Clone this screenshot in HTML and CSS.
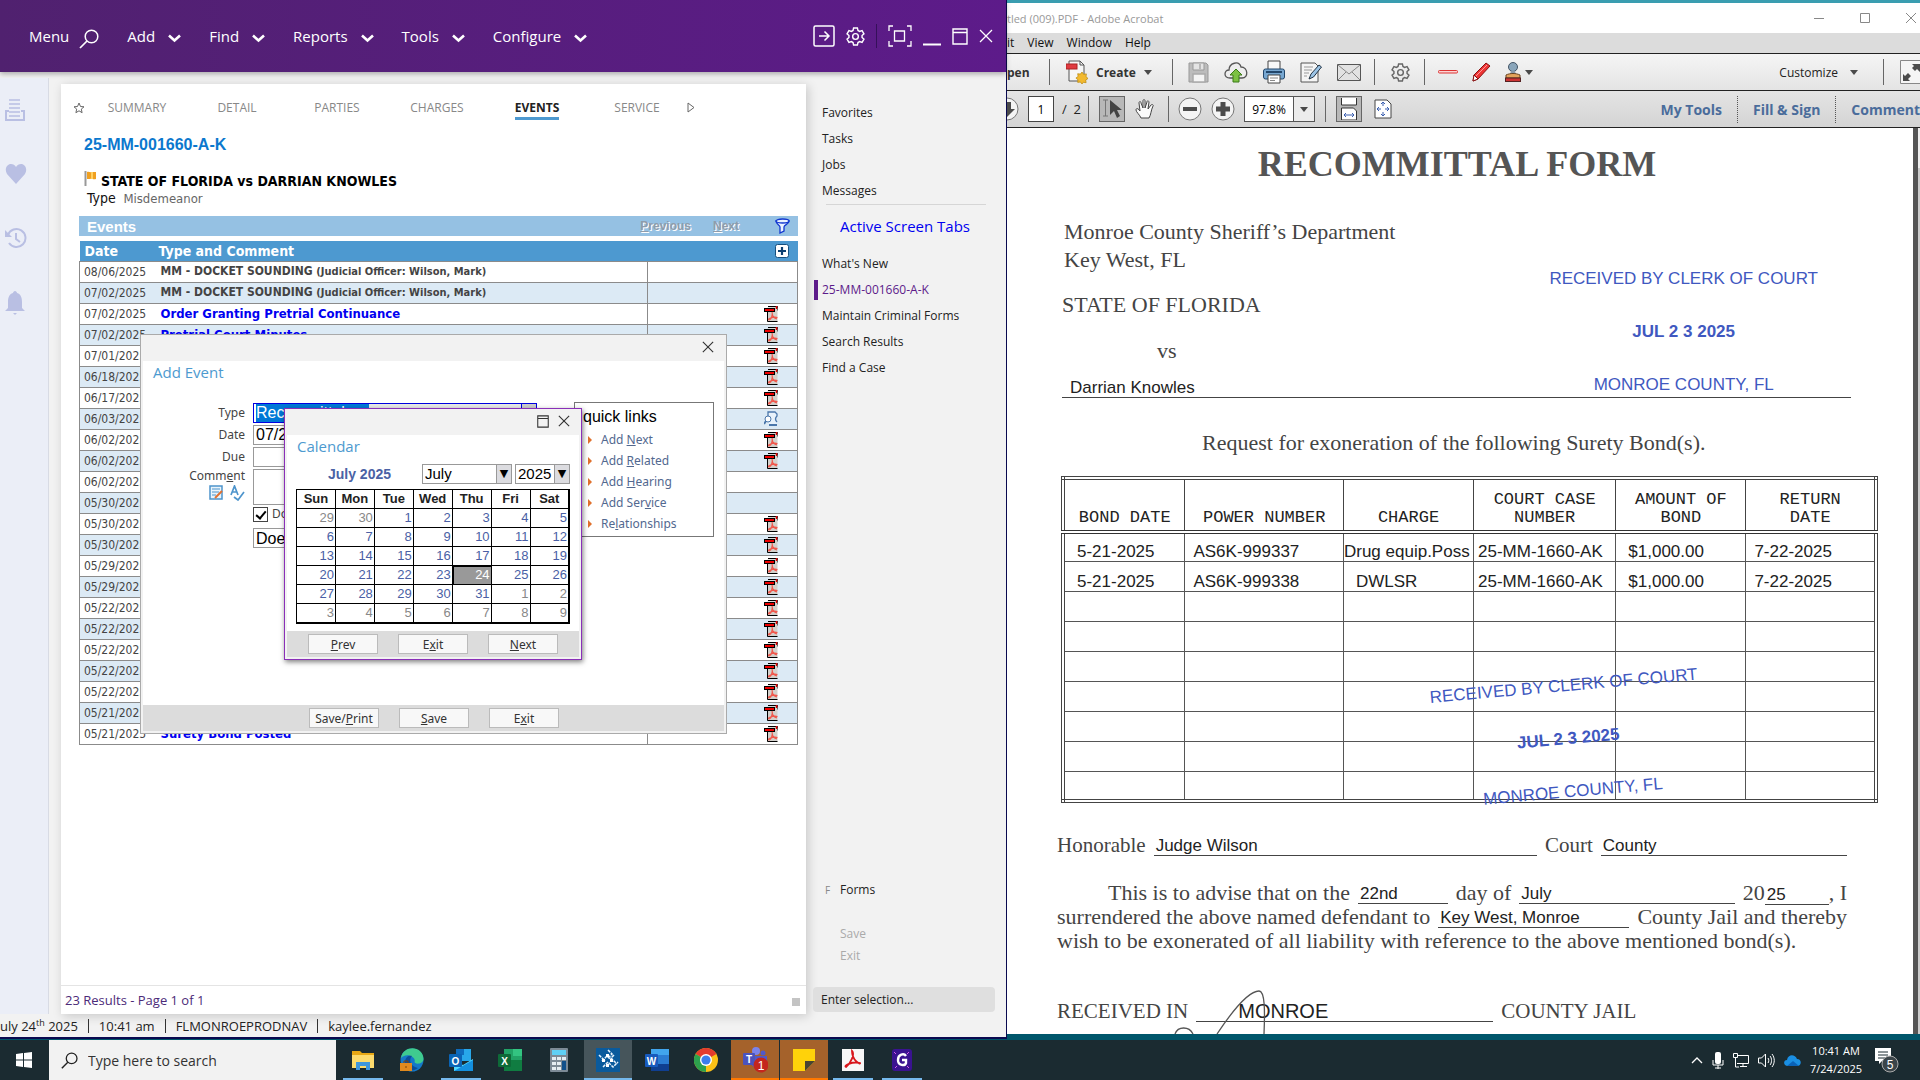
FILE: index.html
```html
<!DOCTYPE html>
<html lang="en">
<head>
<meta charset="utf-8">
<title>Case Manager - Events</title>
<link rel="stylesheet" href="styles.css">
</head>
<body>
<svg class="defs" aria-hidden="true">
  <symbol id="chev" viewBox="0 0 13 9"><path d="M1 1.5 6.500 6.500 12 1.500" fill="none" stroke="#fff" stroke-width="2.600"/></symbol>
  <symbol id="x" viewBox="0 0 14 14"><path d="M1 1 13 13M13 1 1 13" fill="none" stroke="currentColor" stroke-width="1.300"/></symbol>
  <symbol id="pdf" viewBox="0 0 14 16"><path d="M4 .5h9.500v4" fill="#ddd" stroke="#000"/><rect x="3.500" y="1.500" width="10" height="14" fill="#d3d0cb"/><path d="M3.500 5v10.500H13.500" fill="none" stroke="#000"/><rect x=".5" y="2.500" width="10" height="3" fill="#f00000" stroke="#000"/><path d="M12.500 0v3" stroke="#d00" stroke-width="1.500"/><path d="M8 6c1 2 .5 3.500-.5 5.500S5 14.500 4.500 13.500 9 10.500 13.500 11.500M8 8c.5 2 2.500 4 5 5" fill="none" stroke="#f0584c" stroke-width="1.200"/></symbol>
  <symbol id="doc" viewBox="0 0 14 16"><path d="M4 1h7l2 2v3c-2 1-2 3 0 4v3H5z" fill="#e8f2fb"/><path d="M4 5V1h7l2 2v2c-2 2-2 4 0 6" fill="none" stroke="#4b77ab" stroke-width="1.300"/><circle cx="4" cy="8" r="3" fill="#fff" stroke="#4b77ab"/><path d="M2 10 0 13M5 14h8" stroke="#4b77ab" stroke-width="2"/></symbol>
  <symbol id="gear" viewBox="0 0 20 20"><path d="M8 1h4l.6 2.600 1.700 1 2.600-.8 2 3.400-2 1.800v2l2 1.800-2 3.400-2.600-.8-1.700 1L12 19H8l-.6-2.600-1.700-1-2.600.8-2-3.400L3.100 11V9L1.100 7.200l2-3.400 2.600.8 1.700-1z" fill="none" stroke="currentColor" stroke-width="1.500"/><circle cx="10" cy="10" r="3" fill="none" stroke="currentColor" stroke-width="1.500"/></symbol>
  <symbol id="win" viewBox="0 0 16 17"><path d="M1 1h14v15H1zM1 4.500h14" fill="none" stroke="currentColor" stroke-width="1.400"/></symbol>
  <symbol id="caret" viewBox="0 0 8 5"><path d="M0 0h8L4 5z" fill="#4a4a4a"/></symbol>
  <symbol id="lens" viewBox="0 0 20 20"><circle cx="12.500" cy="7.500" r="6.300" fill="none" stroke="currentColor" stroke-width="1.500"/><path d="M8 12 1 19" stroke="currentColor" stroke-width="1.700"/></symbol>
</svg>

<div class="desktop">
<section class="app">
  <header class="topbar">
    <nav class="menu">
      <button>Menu</button><button class="find" aria-label="Search"><svg width="20" height="20"><use href="#lens"/></svg></button>
      <button>Add <svg width="13" height="9"><use href="#chev"/></svg></button>
      <button>Find <svg width="13" height="9"><use href="#chev"/></svg></button>
      <button>Reports <svg width="13" height="9"><use href="#chev"/></svg></button>
      <button>Tools <svg width="13" height="9"><use href="#chev"/></svg></button>
      <button>Configure <svg width="13" height="9"><use href="#chev"/></svg></button>
    </nav>
    <div class="tools">
      <button aria-label="Go"><svg width="22" height="22" viewBox="0 0 22 22" fill="none" stroke="#fff" stroke-width="1.500"><rect x="1" y="1" width="20" height="20" rx="1.500"/><path d="M6 11h10M11.500 6.500 16 11l-4.500 4.500"/></svg></button>
      <button aria-label="Settings"><svg width="19" height="19"><use href="#gear"/></svg></button>
      <span class="sep"></span>
      <button aria-label="Capture"><svg width="24" height="22" viewBox="0 0 24 22" fill="none" stroke="#fff" stroke-width="1.300"><path d="M5 1H1v5M19 1h4v5M5 21H1v-5M19 21h4v-5M6.500 6h10v10h-10z"/></svg></button>
      <button aria-label="Minimize"><svg width="18" height="20" viewBox="0 0 18 20"><path d="M0 18.500h18" stroke="#fff" stroke-width="2"/></svg></button>
      <button aria-label="Maximize"><svg width="16" height="17"><use href="#win"/></svg></button>
      <button aria-label="Close"><svg width="14" height="14"><use href="#x"/></svg></button>
    </div>
  </header>

  <div class="work">
    <aside class="rail">
      <svg width="20" height="22" viewBox="0 0 20 22" fill="none" stroke="#b9bfe3" stroke-width="2"><path d="M4 1h11M4 5h11M4 9h11M4 13h11M4 17h11" stroke-width="1.600"/><path d="M4 12H1v9h18v-9h-3"/></svg>
      <svg width="22" height="22" viewBox="0 0 22 22"><path d="M11 21 2 11C-1 6 2 1 6 1c2 0 4 1 5 3 1-2 3-3 5-3 4 0 7 5 4 10z" fill="#b9bfe3"/></svg>
      <svg width="22" height="22" viewBox="0 0 22 22" fill="none" stroke="#b9bfe3" stroke-width="2"><path d="M3 8a9 9 0 1 1 1 8M11 6v6l4 3"/><path d="M0 3v7h7z" fill="#b9bfe3" stroke="none"/></svg>
      <svg width="20" height="24" viewBox="0 0 20 24" fill="#b9bfe3"><path d="M10 0c1 0 2 1 2 2 4 1 5 5 5 9v6l3 3H0l3-3v-6c0-4 1-8 5-9 0-1 1-2 2-2zM8 22h4l-2 2z"/></svg>
    </aside>

    <main class="panel">
      <nav class="tabs">
        <svg width="12" height="12" viewBox="0 0 12 12"><path d="M6 1l1.500 3.500 3.500.3-2.700 2.300.8 3.600L6 8.800 2.900 10.700l.8-3.600L1 4.800l3.500-.3z" fill="none" stroke="#666"/></svg>
        <a href="#">SUMMARY</a><a href="#">DETAIL</a><a href="#">PARTIES</a><a href="#">CHARGES</a><a href="#" class="on">EVENTS</a><a href="#">SERVICE</a>
        <svg width="8" height="11" viewBox="0 0 8 11"><path d="M1 1v9l6-4.500z" fill="none" stroke="#666"/></svg>
      </nav>
      <div class="case">
        <h1>25-MM-001660-A-K</h1>
        <div class="style"><svg width="12" height="15" viewBox="0 0 12 15"><path d="M1.500 0v15" stroke="#999" stroke-width="2"/><path d="M3 1c2-1 3 1 5 0h4v7c-3 1-4-1-6 0H3z" fill="#f0a020"/><path d="M8 1v7" stroke="#ffd060" stroke-width="2"/></svg>STATE OF FLORIDA vs DARRIAN KNOWLES</div>
        <div class="kind"><span>Type</span> Misdemeanor</div>
      </div>
      <div class="evbar">
        <h2>Events</h2><a href="#"><u>P</u>revious</a><a href="#"><u>N</u>ext</a>
        <svg width="15" height="16" viewBox="0 0 15 16" fill="#eaf3ff" stroke="#1238d0" stroke-width="1.300"><path d="M1 3c0 3 4 4 4 6v6l4-2V9c0-2 5-3 5-6z"/><ellipse cx="7.500" cy="3" rx="6.500" ry="2"/></svg>
      </div>
      <table class="events">
        <colgroup><col class="c1"><col class="c2"><col></colgroup>
        <thead><tr><th>Date</th><th>Type and Comment</th><th class="ic"><button aria-label="Add event"><svg width="14" height="14" viewBox="0 0 14 14"><rect x=".5" y=".5" width="13" height="13" rx="2" fill="#fff" stroke="#17507e"/><path d="M7 3v8M3 7h8" stroke="#0c3f70" stroke-width="2.200"/></svg></button></th></tr></thead>
        <tbody>
        <tr><td>08/06/2025</td><td class="hear">MM - DOCKET SOUNDING <small>(Judicial Officer: Wilson, Mark)</small></td><td></td></tr>
        <tr><td>07/02/2025</td><td class="hear">MM - DOCKET SOUNDING <small>(Judicial Officer: Wilson, Mark)</small></td><td></td></tr>
        <tr><td>07/02/2025</td><td><a href="#">Order Granting Pretrial Continuance</a></td><td class="ic"><svg width="14" height="16"><use href="#pdf"/></svg></td></tr>
        <tr><td>07/02/2025</td><td><a href="#">Pretrial Court Minutes</a></td><td class="ic"><svg width="14" height="16"><use href="#pdf"/></svg></td></tr>
        <tr><td>07/01/2025</td><td></td><td class="ic"><svg width="14" height="16"><use href="#pdf"/></svg></td></tr>
        <tr><td>06/18/2025</td><td></td><td class="ic"><svg width="14" height="16"><use href="#pdf"/></svg></td></tr>
        <tr><td>06/17/2025</td><td></td><td class="ic"><svg width="14" height="16"><use href="#pdf"/></svg></td></tr>
        <tr><td>06/03/2025</td><td></td><td class="ic"><svg width="14" height="16"><use href="#doc"/></svg></td></tr>
        <tr><td>06/02/2025</td><td></td><td class="ic"><svg width="14" height="16"><use href="#pdf"/></svg></td></tr>
        <tr><td>06/02/2025</td><td></td><td class="ic"><svg width="14" height="16"><use href="#pdf"/></svg></td></tr>
        <tr><td>06/02/2025</td><td></td><td></td></tr>
        <tr><td>05/30/2025</td><td></td><td></td></tr>
        <tr><td>05/30/2025</td><td></td><td class="ic"><svg width="14" height="16"><use href="#pdf"/></svg></td></tr>
        <tr><td>05/30/2025</td><td></td><td class="ic"><svg width="14" height="16"><use href="#pdf"/></svg></td></tr>
        <tr><td>05/29/2025</td><td></td><td class="ic"><svg width="14" height="16"><use href="#pdf"/></svg></td></tr>
        <tr><td>05/29/2025</td><td></td><td class="ic"><svg width="14" height="16"><use href="#pdf"/></svg></td></tr>
        <tr><td>05/22/2025</td><td></td><td class="ic"><svg width="14" height="16"><use href="#pdf"/></svg></td></tr>
        <tr><td>05/22/2025</td><td></td><td class="ic"><svg width="14" height="16"><use href="#pdf"/></svg></td></tr>
        <tr><td>05/22/2025</td><td></td><td class="ic"><svg width="14" height="16"><use href="#pdf"/></svg></td></tr>
        <tr><td>05/22/2025</td><td></td><td class="ic"><svg width="14" height="16"><use href="#pdf"/></svg></td></tr>
        <tr><td>05/22/2025</td><td></td><td class="ic"><svg width="14" height="16"><use href="#pdf"/></svg></td></tr>
        <tr><td>05/21/2025</td><td></td><td class="ic"><svg width="14" height="16"><use href="#pdf"/></svg></td></tr>
        <tr><td>05/21/2025</td><td><a href="#">Surety Bond Posted</a></td><td class="ic"><svg width="14" height="16"><use href="#pdf"/></svg></td></tr>
        </tbody>
      </table>
      <footer class="results"><span>23 Results - Page 1 of 1</span><i></i></footer>
    </main>

    <aside class="side">
      <nav class="links"><a href="#">Favorites</a><a href="#">Tasks</a><a href="#">Jobs</a><a href="#">Messages</a></nav>
      <h3>Active Screen Tabs</h3>
      <nav class="links"><a href="#">What's New</a><a href="#" class="cur">25-MM-001660-A-K</a><a href="#">Maintain Criminal Forms</a><a href="#">Search Results</a><a href="#">Find a Case</a></nav>
      <div class="forms"><button class="f"><span>F</span>Forms</button><button disabled>Save</button><button disabled>Exit</button></div>
      <input class="enter" aria-label="Enter selection" placeholder="Enter selection...">
    </aside>
  </div>

  <footer class="status"><span>uly 24<sup>th</sup> 2025</span><span>10:41 am</span><span>FLMONROEPRODNAV</span><span>kaylee.fernandez</span></footer>

  <section class="dialog add">
    <header><button aria-label="Close"><svg width="12" height="12"><use href="#x"/></svg></button></header>
    <div class="body">
      <h4>Add Event</h4>
      <div class="cols">
        <form class="form">
          <label for="type">Type</label><span class="combo"><input id="type" value="Recommittal"><button type="button" aria-label="Choose type">▼</button></span>
          <label for="date">Date</label><input id="date" class="must" value="07/24/2025">
          <label for="due">Due</label><input id="due">
          <div class="lab"><label for="comment">Comm<u>e</u>nt</label>
            <div><svg width="14" height="16" viewBox="0 0 14 16"><path d="M1 1h12v13H1z" fill="#eaf4fb" stroke="#4d94cc" stroke-width="1.500"/><path d="M3 4h8M3 7h7M3 10h4" stroke="#4d94cc"/><path d="M6 13 13 6" stroke="#e07030" stroke-width="2"/></svg><svg width="15" height="16" viewBox="0 0 15 16" fill="none" stroke="#4d94cc" stroke-width="1.700"><path d="M1 10 4.500 1 8 10M2 7h5M4 12l4 3 6-8"/></svg></div>
          </div><textarea id="comment"></textarea>
          <span></span><span class="chk"><input type="checkbox" id="dk" checked><label for="dk">Docket</label></span>
          <span></span><select class="does" aria-label="Public access"><option>Does not apply</option></select>
        </form>
        <div class="quick">
          <h5>quick links</h5>
          <a href="#">Add <u>N</u>ext</a><a href="#">Add <u>R</u>elated</a><a href="#">Add <u>H</u>earing</a><a href="#">Add Ser<u>v</u>ice</a><a href="#">Re<u>l</u>ationships</a>
        </div>
      </div>
    </div>
    <footer><button>Save/<u>P</u>rint</button><button><u>S</u>ave</button><button>E<u>x</u>it</button></footer>
  </section>

  <section class="dialog cal">
    <header><button aria-label="Maximize"><svg width="12" height="13"><use href="#win"/></svg></button><button aria-label="Close"><svg width="12" height="12"><use href="#x"/></svg></button></header>
    <div class="body">
      <h4>Calendar</h4>
      <div class="pick"><strong>July 2025</strong><span class="dd m"><select aria-label="Month"><option>July</option></select></span><span class="dd y"><select aria-label="Year"><option>2025</option></select></span></div>
      <table class="days">
        <thead><tr><th>Sun</th><th>Mon</th><th>Tue</th><th>Wed</th><th>Thu</th><th>Fri</th><th>Sat</th></tr></thead>
        <tbody>
        <tr><td class="o">29</td><td class="o">30</td><td>1</td><td>2</td><td>3</td><td>4</td><td>5</td></tr>
        <tr><td>6</td><td>7</td><td>8</td><td>9</td><td>10</td><td>11</td><td>12</td></tr>
        <tr><td>13</td><td>14</td><td>15</td><td>16</td><td>17</td><td>18</td><td>19</td></tr>
        <tr><td>20</td><td>21</td><td>22</td><td>23</td><td class="sel">24</td><td>25</td><td>26</td></tr>
        <tr><td>27</td><td>28</td><td>29</td><td>30</td><td>31</td><td class="o">1</td><td class="o">2</td></tr>
        <tr><td class="o">3</td><td class="o">4</td><td class="o">5</td><td class="o">6</td><td class="o">7</td><td class="o">8</td><td class="o">9</td></tr>
        </tbody>
      </table>
    </div>
    <footer><button><u>P</u>rev</button><button>E<u>x</u>it</button><button><u>N</u>ext</button></footer>
  </section>
</section>

<section class="acro">
  <header class="title"><span>tled (009).PDF - Adobe Acrobat</span>
    <div class="wb"><svg width="10" height="10"><path d="M0 5.500h10" stroke="#888"/></svg><svg width="10" height="10"><path d="M.5.5h9v9h-9z" fill="none" stroke="#888"/></svg><svg width="10" height="10"><path d="M0 0 10 10M10 0 0 10" stroke="#888"/></svg></div>
  </header>
  <nav class="mbar"><button>it</button><button>View</button><button>Window</button><button>Help</button></nav>
  <div class="tb one">
    <button class="open">pen</button><i class="sep"></i>
    <button class="create"><svg width="22" height="24" viewBox="0 0 22 24"><path d="M3 1h11l4 4v16H3z" fill="#f6f6f6" stroke="#555"/><path d="M14 1v4h4" fill="none" stroke="#555"/><rect x="0" y="4" width="11" height="5" fill="#e03a40" stroke="#a22"/><path d="M16 12l1.600 2.300 2.800-.4-.4 2.700 2 1.900-2.300 1.500.4 2.700-2.700-.4L16 24l-1.600-2-2.700.4.200-2.700-2-1.600 2.200-1.700-.4-2.700 2.700.4z" fill="#f2b92f" stroke="#b8860b" stroke-width=".7"/></svg>Create<svg width="8" height="5"><use href="#caret"/></svg></button><i class="sep"></i>
    <div class="grp a">
    <svg width="21" height="21" viewBox="0 0 21 21"><path d="M1 1h17l2 2v17H1z" fill="#bcbcbc" stroke="#999"/><path d="M5 1h11v7H5z" fill="#e4e4e4" stroke="#999"/><path d="M12 2v5M5 12h12v8H5z" fill="#f4f4f4" stroke="#aaa" stroke-width="1.500"/></svg>
    <svg width="24" height="22" viewBox="0 0 24 22"><path d="M6 17C-1 17 0 9 5 9 5 2 15-1 17 6c7 0 8 11 1 11z" fill="#eee" stroke="#555" stroke-width="1.300"/><path d="M12 8l6 6h-3v7h-6v-7H6z" fill="#7cc142" stroke="#3a7a17"/></svg>
    <svg width="22" height="24" viewBox="0 0 22 24"><path d="M5 1h12v9H5z" fill="#f8f8f8" stroke="#444"/><rect x=".5" y="9" width="21" height="10" rx="2" fill="#77a7d1" stroke="#23476b"/><path d="M3 12h16" stroke="#23476b" stroke-width="2"/><path d="M5 15h12v8H5z" fill="#fff" stroke="#444"/><path d="M7 18h8M7 20.500h5" stroke="#888"/></svg>
    <svg width="22" height="21" viewBox="0 0 22 21"><path d="M1 1h14l3 3v16H1z" fill="#f5f5f5" stroke="#555"/><path d="M4 5h9M4 8h8M4 11h5M4 14h3" stroke="#999"/><path d="M9 17 11 12 19 3l2.500 2-8 10z" fill="#9cc4e6" stroke="#234"/></svg>
    <svg width="24" height="17" viewBox="0 0 24 17"><path d="M.5.5h23v16H.5z" fill="#e2e2e2" stroke="#555"/><path d="M1 1l11 9L23 1M1 16l8-8M23 16l-8-8" fill="none" stroke="#888"/></svg>
    </div><i class="sep"></i>
    <svg class="cog" width="19" height="19"><use href="#gear"/></svg><i class="sep"></i>
    <div class="grp b">
    <svg width="20" height="4"><rect x=".5" y=".5" width="19" height="2.500" rx="1" fill="#fbd5d5" stroke="#d33"/></svg>
    <svg width="19" height="20" viewBox="0 0 19 20"><path d="M1 19l1-6L14 1l4 3L6 17z" fill="#e33" stroke="#811"/><path d="M1 19l1-6 4 4z" fill="#fff" stroke="#811"/><path d="M4 14 15 3" stroke="#f99"/></svg>
    <span class="stampi"><svg width="16" height="20" viewBox="0 0 16 20"><circle cx="8" cy="5" r="4.500" fill="#8aa6bb" stroke="#456"/><path d="M6 9h4l1 4H5z" fill="#89a"/><path d="M1 13c4-2 10-2 14 0v3H1z" fill="#e3a35c" stroke="#642"/><rect x=".5" y="16" width="15" height="3.500" fill="#c33" stroke="#522"/></svg><svg width="8" height="5"><use href="#caret"/></svg></span>
    </div>
    <button class="cust">Customize<svg width="8" height="5"><use href="#caret"/></svg></button><i class="sep"></i>
    <svg class="exp" width="20" height="24" viewBox="0 0 20 24"><path d="M20 .5H.5v23H20" fill="#f5f5f5" stroke="#888"/><path d="M3 14v7h7l-2-2 3-3-3-3-3 3zM12 4h8v8l-3-3-2 2-3-3 2-2z" fill="#4c4c4c"/></svg>
  </div>
  <div class="tb two">
    <svg class="dn" width="12" height="24" viewBox="12 0 12 24"><circle cx="12" cy="12" r="11" fill="#f4f4f4" stroke="#777"/><path d="M8 5h8v7h4l-8 8-8-8h4z" fill="#4c4c4c"/></svg>
    <input class="pg" aria-label="Page" value="1"><span class="of">/&nbsp; 2</span><i class="sep"></i>
    <button class="press" aria-label="Select"><svg width="20" height="20" viewBox="0 0 20 20"><path d="M1 1h5M3.500 1v16M1 17h5" stroke="#777"/><path d="M8 1v15l4-4 3 7 3-2-3-6h5z" fill="#444"/></svg></button>
    <svg class="hand" width="20" height="20" viewBox="0 0 20 20"><path d="M6 19c-1-3-5-6-5-8s2-2 4 1L4 4c0-2 2-2 2 0l2 5V2c0-2 2-2 2 0v7l2-6c0-2 2-1 2 0l-1 7 3-4c1-1 3 0 2 1-2 4-2 9-4 12z" fill="#fafafa" stroke="#444"/></svg><i class="sep"></i>
    <svg class="pm" width="24" height="24" viewBox="0 0 24 24"><circle cx="12" cy="12" r="11" fill="#f4f4f4" stroke="#777"/><path d="M5 12h14" stroke="#4c4c4c" stroke-width="4"/></svg>
    <svg class="pm" width="24" height="24" viewBox="0 0 24 24"><circle cx="12" cy="12" r="11" fill="#f4f4f4" stroke="#777"/><path d="M5 12h14M12 5v14" stroke="#4c4c4c" stroke-width="5"/></svg>
    <span class="zoom"><input aria-label="Zoom" value="97.8%"><button aria-label="Zoom levels"><svg width="8" height="5"><use href="#caret"/></svg></button></span><i class="sep"></i>
    <button class="press" aria-label="Scrolling"><svg width="18" height="22" viewBox="0 0 18 22" fill="#fff" stroke="#333"><path d="M1.500 0v7h15V0M1.500 22V10h12l3 3v9z"/><path d="M4 17h10M6 15l-2 2 2 2M12 15l2 2-2 2" stroke="#3a5fb0" fill="none"/></svg></button>
    <svg class="fit" width="18" height="20" viewBox="0 0 18 20" fill="#fff" stroke="#444"><path d="M1 1h12l4 4v14H1z"/><path d="M9 3v4M9 13v4M3 10h4M11 10h4M7 5l2-2 2 2M7 15l2 2 2-2M5 8l-2 2 2 2M13 8l2 2-2 2" stroke="#3a5fb0" fill="none"/></svg>
    <div class="panes"><button>My Tools</button><button>Fill &amp; Sign</button><button>Comment</button></div>
  </div>
  <div class="view">
    <article class="paper">
      <h1>RECOMMITTAL FORM</h1>
      <p class="dept">Monroe County Sheriff’s Department<br>Key West, FL</p>
      <p class="state">STATE OF FLORIDA</p>
      <p class="vs">vs</p>
      <p class="def">Darrian Knowles</p>
      <p class="req">Request for exoneration of the following Surety Bond(s).</p>
      <table class="bond">
        <colgroup><col class="b1"><col class="b2"><col class="b3"><col class="b4"><col class="b5"><col class="b6"></colgroup>
        <thead><tr><th>BOND DATE</th><th>POWER NUMBER</th><th>CHARGE</th><th>COURT CASE<br>NUMBER</th><th>AMOUNT OF<br>BOND</th><th>RETURN<br>DATE</th></tr></thead>
        <tbody>
        <tr><td class="wide">5-21-2025</td><td>AS6K-999337</td><td class="flush">Drug equip.Poss</td><td class="tight">25-MM-1660-AK</td><td class="wide">$1,000.00</td><td>7-22-2025</td></tr>
        <tr><td class="wide">5-21-2025</td><td>AS6K-999338</td><td class="wide">DWLSR</td><td class="tight">25-MM-1660-AK</td><td class="wide">$1,000.00</td><td>7-22-2025</td></tr>
        <tr><td></td><td></td><td></td><td></td><td></td><td></td></tr>
        <tr><td></td><td></td><td></td><td></td><td></td><td></td></tr>
        <tr><td></td><td></td><td></td><td></td><td></td><td></td></tr>
        <tr><td></td><td></td><td></td><td></td><td></td><td></td></tr>
        <tr><td></td><td></td><td></td><td></td><td></td><td></td></tr>
        <tr><td></td><td></td><td></td><td></td><td></td><td></td></tr>
        <tr><td></td><td></td><td></td><td></td><td></td><td></td></tr>
        </tbody>
      </table>
      <p class="ln hon"><span>Honorable</span><b class="w384">Judge Wilson</b><span>Court</span><b class="w246">County</b></p>
      <p class="ln first"><span>This is to advise that on the</span><b class="w86">22nd</b><span>day of</span><b class="w209">July</b><span class="yr">20<b>25</b>, I</span></p>
      <p class="ln"><span>surrendered the above named defendant to</span><b class="w199">Key West, Monroe</b><span>County Jail and thereby</span></p>
      <p class="ln">wish to be exonerated of all liability with reference to the above mentioned bond(s).</p>
      <p class="ln rec"><span>RECEIVED IN</span><b>MONROE</b><span>COUNTY JAIL</span></p>
      <div class="ink s1"><span>RECEIVED BY CLERK OF COURT</span><strong>JUL 2 3 2025</strong><span>MONROE COUNTY, FL</span></div>
      <div class="ink s2"><span>RECEIVED BY CLERK OF COURT</span><strong>JUL 2 3 2025</strong><span>MONROE COUNTY, FL</span></div>
      <svg class="sig" width="100" height="46" viewBox="0 0 100 46" fill="none" stroke="#555" stroke-width="1.300"><path d="M44 46C56 28 74 3 86 3c6 0 6 20 5 43M2 46c3-8 14-8 18 0"/></svg>
    </article>
    <div class="edge"></div><div class="scroll"></div>
  </div>
</section>
</div>

<footer class="taskbar">
  <button class="start" aria-label="Start"><svg width="16" height="16" viewBox="0 0 16 16" fill="#fff"><path d="M0 2l7-1v6.500H0zM8 1l8-1v7.500H8zM0 8.500h7V15l-7-1zM8 8.500h8V16l-8-1z"/></svg></button>
  <label class="search"><svg width="17" height="17"><use href="#lens"/></svg><input placeholder="Type here to search" aria-label="Search"></label>
  <nav class="apps">
    <button class="run" aria-label="Explorer"><svg width="22" height="20" viewBox="0 0 22 20"><path d="M0 1h8l2 2h12v15H0z" fill="#e8a815"/><path d="M0 5h22v13H0z" fill="#fddb6d"/><path d="M4 20v-8h14v8h-4v-4H8v4z" fill="#3f97dd"/></svg></button>
    <button aria-label="Edge"><svg width="24" height="24" viewBox="0 0 24 24"><circle cx="12" cy="12" r="11.500" fill="#1578c8"/><path d="M1 10C3-3 23-3 23.500 11c0 5-8 6-9 3 2-5-8-10-13.500-4z" fill="#3fcb8f"/><path d="M5 15c0-7 5-8 7-7-4 4-1 11 6 12-5 4-13 3-13-5z" fill="#0b4e9a"/><path d="M0 15h12v8H0z" fill="#e08a1e"/><path d="M4 15v-2h4v2M5 19h2" stroke="#7a430a" fill="none"/></svg></button>
    <button class="run" aria-label="Outlook"><svg width="24" height="22" viewBox="0 0 24 22"><path d="M7 0h15v12H7z" fill="#28a8ea"/><path d="M7 0h8v6H7z" fill="#0f6cbd"/><path d="M5 11l9 5 10-6v12H5z" fill="#50d9ff"/><path d="M5 22 24 11v11z" fill="#1490df"/><rect y="5" width="13" height="13" rx="1" fill="#0a64b5"/><text x="6.500" y="15.500" class="gl">O</text></svg></button>
    <button aria-label="Excel"><svg width="24" height="22" viewBox="0 0 24 22"><path d="M6 0h18v22H6z" fill="#21a366"/><path d="M15 0h9v7h-9z" fill="#33c481"/><path d="M6 11h18v11H6z" fill="#107c41"/><rect y="5" width="13" height="13" rx="1" fill="#0e6a38"/><text x="6.500" y="15.500" class="gl">X</text></svg></button>
    <button aria-label="Calculator"><svg width="18" height="24" viewBox="0 0 18 24"><rect width="18" height="24" rx="1" fill="#7c8a96"/><path d="M2 2h14v5H2z" fill="#5fd0f5"/><path d="M2 9h4v3H2zM7 9h4v3H7zM12 9h4v3h-4zM2 14h4v3H2zM7 14h4v3H7zM2 19h4v3H2zM7 19h4v3H7z" fill="#e5edf2"/><path d="M12 13h4v9h-4z" fill="#12508a"/></svg></button>
    <button class="run act" aria-label="Odyssey"><svg width="24" height="24" viewBox="0 0 24 24"><path d="M0 0h24v24H0z" fill="#0a5a9c"/><g fill="none" stroke="#e6f2fc" stroke-width="1.500"><path d="M3 7 9 13M6 13l5-5 5 5M7 19l5-5 5 5 5-5M12 2l4 4-3 3M18 7l-3 3 6 6" stroke-dasharray="3 1"/></g><path d="M10 6h3v3h-3zM6 11h3v3H6zM14 11h3v3h-3zM10 16h3v3h-3z" fill="#fff"/></svg></button>
    <button aria-label="Word"><svg width="24" height="22" viewBox="0 0 24 22"><path d="M6 0h18v22H6z" fill="#2b7cd3"/><path d="M6 0h18v6H6z" fill="#41a5ee"/><path d="M6 15h18v7H6z" fill="#103f91"/><rect y="5" width="13" height="13" rx="1" fill="#185abd"/><text x="6.500" y="15.500" class="gl">W</text></svg></button>
    <button aria-label="Chrome"><svg width="24" height="24" viewBox="0 0 24 24"><circle cx="12" cy="12" r="12" fill="#fbc116"/><path d="M12 12 1.600 6A12 12 0 0 1 22.400 6z" fill="#e33b2e"/><path d="M12 12 1.600 6A12 12 0 0 0 12 24z" fill="#2da14d"/><circle cx="12" cy="12" r="6" fill="#fff"/><circle cx="12" cy="12" r="4.600" fill="#3b7ded"/></svg></button>
    <button class="alert" aria-label="Teams"><svg width="26" height="26" viewBox="0 0 26 26"><circle cx="14" cy="4" r="4" fill="#7b83eb"/><circle cx="21" cy="6" r="2.500" fill="#5059c9"/><path d="M9 9h16v7c0 4-14 8-16 0z" fill="#5059c9"/><rect x="1" y="6" width="12" height="12" rx="1" fill="#4b53bc"/><text x="7" y="15.500" class="gl">T</text><circle cx="19" cy="18" r="7.500" fill="#c4261d"/><text x="19" y="22.500" class="gl n">1</text></svg></button>
    <button class="alert" aria-label="Sticky Notes"><svg width="22" height="22" viewBox="0 0 22 22"><path d="M0 0h22v12L12 22H0z" fill="#ffd20a"/><path d="M12 22V12h10z" fill="#4a4432"/></svg></button>
    <button class="run" aria-label="Acrobat"><svg width="22" height="22" viewBox="0 0 22 22"><path d="M0 0h22v22H0z" fill="#f7f7f7"/><path d="M10 2c3 3-1 12-6 16-3-1 6-6 14-4 1 2-8-2-8-12z" fill="none" stroke="#d8161b" stroke-width="1.800"/></svg></button>
    <button class="run" aria-label="Snagit"><svg width="20" height="22" viewBox="0 0 20 22"><rect width="20" height="22" rx="3" fill="#3a1390"/><path d="M14 7c-2-3-8-2-8 4s7 6 8 3v-3h-4" fill="none" stroke="#fff" stroke-width="2.400"/><path d="M2 3l2 2M17 3l-2 2M3 19l2-2M17 19l-2-2" stroke="#d35bea"/></svg></button>
  </nav>
  <div class="tray">
    <svg width="12" height="7"><path d="M1 6 6 1l5 5" fill="none" stroke="#fff" stroke-width="1.300"/></svg>
    <svg width="12" height="17" viewBox="0 0 12 17"><rect x="3" width="6" height="12" rx="2" fill="#fff"/><path d="M1 8v5h10V8M6 13v4M3 16h6" fill="none" stroke="#fff"/></svg>
    <svg width="16" height="15" viewBox="0 0 16 15" fill="none" stroke="#fff"><path d="M4 2.500h11.500v8H4M7 13.500h7M10 11v3M.5.5h4v4h-4zM2.500 5v9H6"/></svg>
    <svg width="17" height="15" viewBox="0 0 17 15" fill="none" stroke="#fff"><path d="M.5 5h3l4-4v13l-4-4h-3zM10 5c1 1 1 4 0 5M12 3c2 2 2 7 0 9M14 1c3 4 3 9 0 13"/></svg>
    <svg width="17" height="11" viewBox="0 0 17 11"><path d="M4 11C-1 11-1 5 3 5c1-6 8-6 10-1 5 0 5 7 0 7z" fill="#1a8fe3"/><path d="M3 11 9 6l6 5z" fill="#0a62b8"/></svg>
    <time>10:41 AM<br>7/24/2025</time>
    <button class="note" aria-label="Notifications"><svg width="24" height="26" viewBox="0 0 24 26"><path d="M0 1h16v13H7l-3 3v-3H0z" fill="#fff"/><path d="M3 5h10M3 8h10M3 11h7" stroke="#1b2b31"/><circle cx="15" cy="17" r="8" fill="#3b454a" stroke="#aaa"/><text x="15" y="21.500" class="gl n">5</text></svg></button>
  </div>
</footer>
</body>
</html>
```
FILE: styles.css
```css
* { box-sizing: border-box; }
body { margin: 0; height: 100vh; display: flex; flex-direction: column; overflow: hidden; font-family: "Open Sans", "Noto Sans", sans-serif; font-size: 13px; color: #222; background: #00566b; }
button { font: inherit; color: inherit; background: none; border: 0; padding: 0; margin: 0; white-space: nowrap; }
input, select, textarea { font: inherit; border-radius: 0; outline: 0; }
a { color: inherit; text-decoration: none; }
h1, h2, h3, h4, h5, p { margin: 0; font-weight: normal; }
svg { flex: none; display: block; }
.defs { position: absolute; width: 0; height: 0; }
.gl { font: bold 10px "Liberation Sans", sans-serif; fill: #fff; text-anchor: middle; }
.gl.n { font-weight: normal; font-size: 12px; }

.desktop { flex: 1; min-height: 0; display: grid; grid-template-columns: 1007fr 913fr; grid-template-rows: 100%; }

/* case manager */
.app { position: relative; display: flex; flex-direction: column; min-width: 0; margin-bottom: 1px; background: #f2f2f2; border-right: 1px solid #0a0a50; border-bottom: 2px solid #0a0a50; }
.topbar { flex: 0 0 72px; display: flex; justify-content: space-between; align-items: center; padding: 0 13px 0 29px; color: #fff; background: linear-gradient(90deg, #50216f, #5d1b8a); box-shadow: 0 2px 5px rgba(0,0,0,.3); }
.menu { display: flex; align-items: center; gap: 28px; font-size: 15px; }
.menu button { display: flex; align-items: center; gap: 13px; }
.menu button svg { margin-top: 4px; }
.menu .find { margin: 2px 0 0 -18px; }
.tools { display: flex; align-items: center; gap: 11px; }
.tools .sep { width: 1px; height: 24px; background: #35105a; }
.work { flex: 1; min-height: 0; display: flex; }
.rail { flex: 0 0 49px; margin: 6px 12px 0 0; padding: 21px 0 0 5px; background: #ebeef7; border-right: 1px solid #d8dbe4; display: flex; flex-direction: column; gap: 42px; }
.panel { flex: 1; min-width: 0; margin-top: 12px; background: #fff; display: flex; flex-direction: column; box-shadow: 2px 2px 10px rgba(0,0,0,.18); }
.tabs { display: grid; grid-template-columns: 16px repeat(6, 100px) 8px; align-items: center; justify-items: center; padding-left: 10px; height: 47px; font-size: 12px; color: #888; }
.tabs a { line-height: 18px; border-bottom: 3px solid transparent; margin-top: 3px; }
.tabs .on { font-weight: bold; color: #222; border-color: #4d99d0; }
.case { padding-left: 23px; height: 85px; font-family: "DejaVu Sans Condensed", "DejaVu Sans", sans-serif; }
.case h1 { font: bold 16px/28px "Liberation Sans", sans-serif; color: #0b78ce; }
.style { display: flex; align-items: center; gap: 5px; font-weight: bold; font-size: 14px; line-height: 18px; margin-top: 13px; color: #000; }
.style svg { margin-top: -6px; }
.kind { padding-left: 3px; line-height: 16px; color: #666; }
.kind span { color: #111; font-size: 14px; margin-right: 4px; }
.evbar { display: flex; align-items: center; height: 20px; margin: 0 8px 5px 18px; padding: 0 8px; background: #95c1e3; font: bold 12px "Liberation Sans", sans-serif; color: #8f9cab; text-shadow: 1px 1px #fff; }
.evbar h2 { flex: 1; font-weight: bold; font-size: 15px; color: #fff; text-shadow: none; }
.evbar a { margin-right: 22px; }
.evbar svg { margin-left: 14px; }
.events { margin: 0 8px 0 18px; border-collapse: collapse; table-layout: fixed; font: 12px "DejaVu Sans Condensed", "DejaVu Sans", sans-serif; color: #444; }
.events .c1 { width: 78px; }
.events .c2 { width: 490px; }
.events th { height: 20px; padding: 0 5px; background: #4d99d0; color: #fff; text-align: left; font-size: 14px; }
.events th:nth-child(2) { padding-left: 1px; }
.events td { height: 21px; padding: 0 4px; border: 1px solid #8b8b8b; line-height: 16px; white-space: nowrap; }
.events td:first-child { border-right: 0; }
.events td:nth-child(2) { border-left: 0; padding-left: 3px; font-weight: bold; }
.events small { font-size: 11px; }
.events tr:nth-child(even) td { background: #dceaf5; }
.events td a { color: #0000f0; font-size: 13px; }
.events .ic svg { margin-left: auto; margin-right: 15px; }
.events th.ic svg { margin-right: 4px; }
.events th button { display: block; margin-left: auto; }
.results { margin-top: auto; height: 29px; border-top: 1px solid #e4e4e4; display: flex; align-items: center; justify-content: space-between; padding: 0 6px 0 4px; color: #4b2a78; }
.results i { width: 8px; height: 8px; background: #c4c4c4; margin-top: 4px; }
.side { flex: 0 0 200px; display: flex; flex-direction: column; padding: 28px 11px 2px 7px; font-size: 12px; color: #222; }
.links { display: flex; flex-direction: column; padding-left: 1px; }
.links a { line-height: 26px; padding-left: 8px; }
.side h3 { margin: 0 9px 13px 13px; border-top: 1px solid #d6d6d6; padding: 9px 0 0 14px; font-size: 15px; line-height: 24px; color: #0000f0; white-space: nowrap; }
.links .cur { color: #5d1b8a; line-height: 20px; margin: 3px 0; border-left: 4px solid #5d1b8a; padding-left: 4px; }
.forms { margin-top: auto; display: flex; flex-direction: column; align-items: flex-start; padding-left: 27px; margin-bottom: 20px; }
.forms button { line-height: 22px; color: #aaa; }
.forms .f { color: #222; margin: 0 0 22px -15px; }
.forms .f span { color: #888; font-size: 10px; display: inline-block; width: 15px; text-align: left; }
.enter { height: 25px; border: 0; border-radius: 4px; background: #dfdfdf; padding: 0 8px; width: 100%; }
.enter::placeholder { color: #222; }
.status { flex: 0 0 23px; display: flex; align-items: center; font-size: 13px; line-height: 14px; }
.status span + span { border-left: 1px solid #333; margin-left: 10px; padding-left: 10px; }
.status sup { font-size: 9px; line-height: 0; }

/* dialogs */
.dialog { position: absolute; display: flex; flex-direction: column; background: #f2f2f2; border: 1px solid #aaa; padding: 0 2px 2px; }
.dialog header { height: 26px; display: flex; justify-content: flex-end; align-items: center; gap: 9px; padding: 0 9px 2px; color: #333; }
.dialog .body { flex: 1; background: #fff; }
.dialog h4 { font-size: 15px; line-height: 22px; color: #4d9acf; padding-left: 10px; }
.dialog footer { height: 26px; background: #dcdcdc; display: flex; align-items: center; gap: 20px; }
.dialog footer button { width: 70px; height: 20px; background: #f8f8f8; border: 1px solid #bbb; font: 12px "Noto Sans", sans-serif; line-height: 17px; color: #333; }
.add { left: 140px; top: 334px; width: 587px; height: 400px; }
.add header { padding-right: 10px; }
.add footer { padding-left: 166px; }
.cal { left: 284px; top: 408px; width: 298px; height: 252px; border-color: #8a2fb8; box-shadow: 1px 2px 5px rgba(0,0,0,.5); }
.cal footer { padding-left: 21px; }
.add h4 { margin-bottom: 19px; }
.cols { display: flex; align-items: flex-start; }
.form { display: grid; grid-template-columns: 102px 284px; column-gap: 8px; row-gap: 2px; justify-items: start; padding-top: 1px; }
.form label, .lab { justify-self: end; text-align: right; font: 12px "Noto Sans", sans-serif; line-height: 20px; color: #444; }
.form input:not([type]), .form textarea, .does { width: 92px; height: 20px; border: 1px solid #999; padding: 0 2px; font: 16px "Liberation Sans", sans-serif; color: #000; background: #fff; }
.form .must, .form .combo input:not([type]) { border-color: #0000e0; }
.combo { display: flex; width: 284px; }
.combo input:not([type]) { flex: 1; background: linear-gradient(90deg, #fff 2px, #0078d7 2px, #0078d7 115px, #e8e8e8 115px); color: #fff; }
.combo button { width: 15px; border: 1px solid #0000e0; border-left: 0; background: #ccc; font-size: 8px; }
.form textarea { height: 36px; resize: none; display: block; }
.lab label { display: block; line-height: 13px; }
.lab > div { display: flex; gap: 7px; margin-top: 3px; justify-content: flex-end; }
.chk { display: flex; gap: 4px; margin-bottom: 4px; }
.chk input { appearance: none; margin: 0; width: 15px; height: 15px; border: 1px solid #444; background: #fff; }
.chk input::after { content: ""; display: block; width: 4px; height: 8px; margin: 1px 0 0 4px; border: solid #000; border-width: 0 2px 2px 0; transform: rotate(40deg); }
.form .chk label { line-height: 14px; }
.does { appearance: none; }
.quick { margin: 0 0 0 37px; width: 140px; height: 135px; border: 1px solid #777; padding: 2px 0 0 8px; display: flex; flex-direction: column; font: 12px "Noto Sans", sans-serif; color: #52688f; }
.quick h5 { font: 16px/24px "Liberation Sans", sans-serif; color: #000; }
.quick a { display: flex; align-items: center; line-height: 21px; white-space: pre; }
.quick a::before { content: ""; margin: 0 9px 0 5px; border: 4px solid transparent; border-left: 4px solid #e0702c; border-right: 0; }
.pick { display: flex; height: 21px; padding: 0 9px 0 10px; margin: 6px 0 5px; font: 16px "Liberation Sans", sans-serif; align-items: center; }
.pick strong { flex: 1; text-align: center; font-size: 14px; color: #4a62a5; }
.dd { display: flex; position: relative; border: 1px solid #999; height: 20px; background: #fff; }
.dd select { appearance: none; border: 0; background: none; width: 100%; padding: 0 2px; font-size: 15px; color: #000; }
.dd::after { content: "▼"; position: absolute; right: 0; top: 0; width: 14px; height: 18px; border-left: 1px solid #999; background: #dcdce0; font: 11px/18px "DejaVu Sans", sans-serif; text-align: center; color: #000; pointer-events: none; }
.m { width: 90px; margin-right: 3px; }
.y { width: 55px; }
.days { width: 274px; margin-left: 9px; table-layout: fixed; border-collapse: collapse; border: 1px solid #000; border-width: 1px 2px 2px 1px; font: 13px "Liberation Sans", sans-serif; }
.days th, .days td { height: 19px; padding: 0 1px; border: 1px solid #000; line-height: 16px; }
.days td { text-align: right; color: #4a5fa5; }
.days .o { color: #888; }
.days .sel { background: #999; color: #fff; box-shadow: inset 1px 1px #000; }

/* document viewer */
.acro { display: flex; flex-direction: column; min-width: 0; border-top: 3px solid #3a9db0; margin-bottom: 6px; background: #fff; overflow: hidden; }
.title { flex: 0 0 30px; display: flex; justify-content: space-between; align-items: center; font-size: 11px; color: #999; padding-right: 4px; }
.wb { display: flex; gap: 36px; }
.mbar { flex: 0 0 20px; display: flex; gap: 13px; background: #dcdcdc; font-size: 12px; color: #111; }
.mbar button { line-height: 18px; }
.tb { flex: 0 0 37px; display: flex; align-items: center; border-top: 1px solid #222; background: linear-gradient(#f5f5f5, #e4e4e4); overflow: hidden; }
.tb.two { border-bottom: 1px solid #222; flex-basis: 38px; background: linear-gradient(#e4e4e4, #d4d4d4); }
.tb .sep { flex: none; width: 1px; height: 26px; background: #666; }
.tb .open, .create { font-weight: bold; font-size: 12px; color: #333; }
.open { width: 42px; text-align: left; }
.create { display: flex; align-items: center; gap: 8px; margin: 0 20px 0 16px; }
.grp { display: flex; align-items: center; }
.a { gap: 15px; margin: 0 13px 0 15px; }
.cog { margin: 0 14px 0 16px; color: #666; }
.b { gap: 14px; margin-left: 13px; }
.stampi { display: flex; align-items: center; gap: 4px; }
.cust { margin: 0 25px 0 auto; display: flex; align-items: center; gap: 12px; font-size: 12px; }
.exp { margin-left: 16px; }
.dn { margin-right: 9px; }
.pg { width: 26px; height: 26px; border: 1px solid #444; text-align: center; padding: 0; font-size: 12px; }
.of { width: 34px; padding-left: 8px; }
.press { width: 26px; height: 26px; border: 1px solid #666; background: #b8b8b8; display: flex; justify-content: center; align-items: center; margin-left: 10px; }
.hand { margin: 0 13px 0 10px; }
.pm { margin-left: 9px; }
.zoom { display: flex; width: 71px; height: 26px; margin: 0 10px 0 9px; border: 1px solid #555; background: #fff; }
.zoom input { width: 48px; border: 0; padding: 0; text-align: center; font-size: 12px; }
.zoom button { flex: 1; border-left: 1px solid #555; background: #ececec; display: flex; justify-content: center; align-items: center; }
.fit { margin-left: 12px; }
.panes { margin-left: auto; display: flex; font-weight: bold; font-size: 14px; color: #4a6c9b; }
.panes button { padding: 4px 15px; }
.panes button + button { border-left: 1px dotted #555; }
.panes button:last-child { padding-right: 0; }
.view { flex: 1; min-height: 0; display: flex; }
.edge { width: 5px; background: #555; }
.scroll { width: 2px; background: linear-gradient(#eee 40px, #ccc 40px); }
.paper { flex: 1; min-width: 0; position: relative; overflow: hidden; padding: 14px 66px 0 50px; font: 22px/28px "Liberation Serif", serif; color: #444; }
.paper h1 { font-weight: bold; font-size: 36px; line-height: 44px; padding-left: 10px; text-align: center; color: #555; }
.dept { margin: 32px 0 17px 7px; }
.state { margin-left: 5px; }
.vs { margin: 18px 0 13px 100px; }
.def { margin: 0 -4px 31px 5px; padding-left: 8px; border-bottom: 1px solid #444; font: 17px/19px "Liberation Sans", sans-serif; color: #222; }
.req { margin: 0 0 19px 145px; white-space: nowrap; }
.bond { width: calc(100% + 27px); height: 327px; margin-left: 4px; margin-right: -31px; border-collapse: collapse; table-layout: fixed; border: 4px double #444; font: 17px/18px "Liberation Sans", sans-serif; color: #222; }
.b1 { width: 15%; } .b2 { width: 19.500%; } .b3 { width: 16%; } .b4 { width: 17.500%; } .b5 { width: 16%; }
.bond th { height: 54px; padding: 0 0 3px; vertical-align: bottom; border: 1px solid #444; border-bottom: 4px double #333; font: 17px/18px "Liberation Mono", monospace; color: #222; white-space: nowrap; }
.bond td { height: 29px; padding: 0 0 0 8px; border: 1px solid #555; white-space: nowrap; vertical-align: bottom; }
.bond .wide { padding-left: 12px; }
.bond .tight { padding-left: 4px; }
.bond .flush { padding-left: 0; }
.ln { display: flex; gap: 8px; height: 24px; line-height: 24px; white-space: nowrap; }
.ln b { align-self: flex-end; font: 17px/19px "Liberation Sans", sans-serif; color: #222; border-bottom: 1px solid #444; padding-left: 2px; margin-bottom: 1px; }
.hon { margin: 30px 0 24px; font-size: 21px; }
.first { padding-left: 51px; }
.w384 { flex: 384; } .w246 { flex: 246; } .w86 { flex: 86; } .w209 { flex: 209; } .w199 { flex: 199; }
.yr b { display: inline-block; width: 64px; }
.rec { margin-top: 46px; font-size: 21px; }
.rec b { width: 297px; padding-left: 42px; font-size: 20px; }
.ink { position: absolute; display: flex; flex-direction: column; align-items: center; font: 17px/20px "Liberation Sans", sans-serif; color: #4058c0; white-space: nowrap; }
.ink strong { font: bold 17px/24px "Liberation Sans", sans-serif; margin: 31px 0; }
.s1 { right: 95px; top: 141px; }
.s2 { left: 427px; top: 548px; transform: rotate(-5deg); }
.sig { position: absolute; left: 166px; bottom: 0; }

/* taskbar */
.taskbar { flex: 0 0 40px; display: flex; background: #1b2b31; color: #fff; }
.start { width: 49px; padding-left: 16px; }
.search { width: 287px; background: #f2f2f2; display: flex; align-items: center; padding-left: 12px; gap: 8px; color: #222; }
.search input { flex: 1; min-width: 0; border: 0; background: none; font-size: 14px; }
.search input::placeholder { color: #333; }
.apps { display: flex; gap: 1px; padding-left: 3px; }
.apps button { width: 48px; height: 40px; display: flex; align-items: center; justify-content: center; }
.apps .run { background: linear-gradient(#76b9ed, #76b9ed) center bottom / 40px 2px no-repeat; }
.apps .act { background-color: #46555b; background-size: 100% 2px; }
.apps .alert { background: #a5622b; box-shadow: inset 0 -2px #ff7800; }
.tray { margin-left: auto; display: flex; align-items: center; gap: 9px; padding-right: 21px; }
.tray time { font-size: 11px; line-height: 18px; text-align: center; width: 52px; }
.note { margin-left: 4px; }
```
